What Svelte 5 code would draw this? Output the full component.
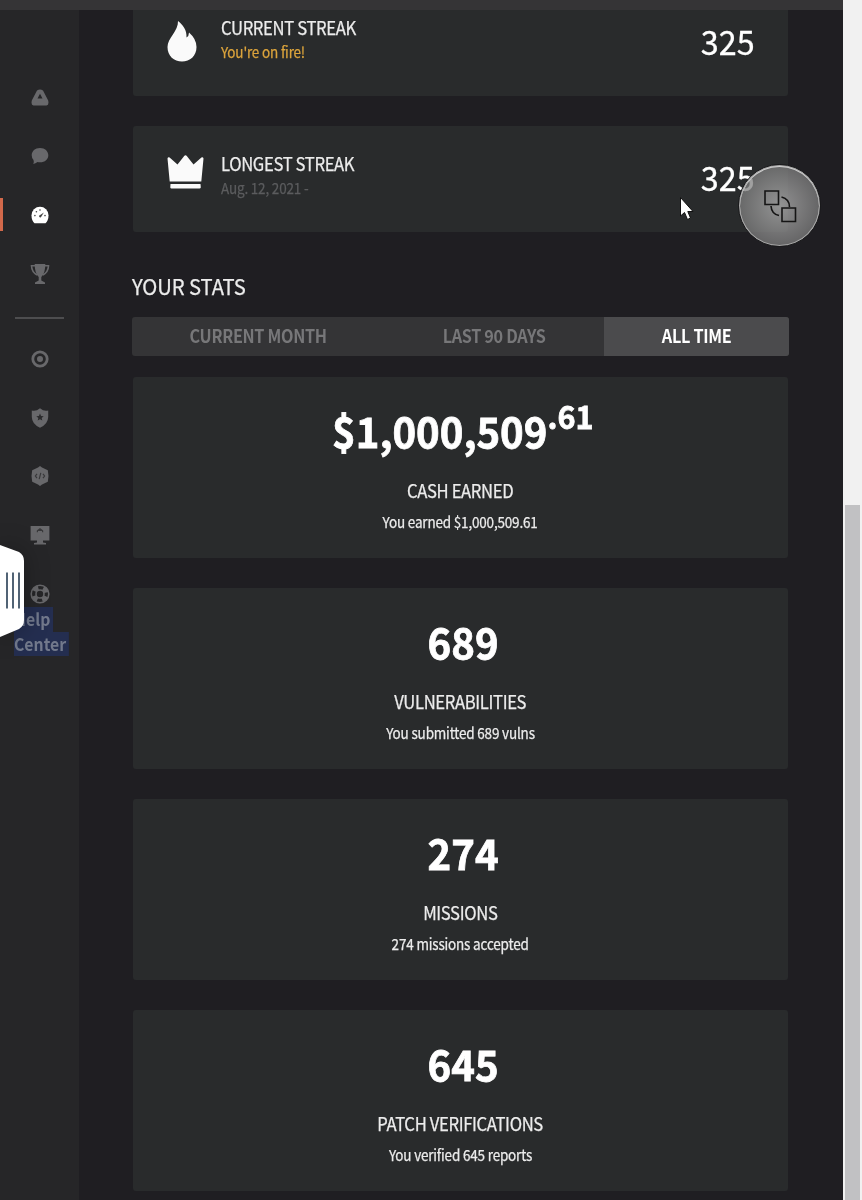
<script>
  let range = 'ALL TIME';

  const tabs = [
    { name: 'CURRENT MONTH', size: 'wide' },
    { name: 'LAST 90 DAYS', size: 'mid' },
    { name: 'ALL TIME', size: 'narrow' }
  ];

  const stats = [
    { value: '$1,000,509', cents: '.61', label: 'CASH EARNED', note: 'You earned $1,000,509.61' },
    { value: '689', label: 'VULNERABILITIES', note: 'You submitted 689 vulns' },
    { value: '274', label: 'MISSIONS', note: '274 missions accepted' },
    { value: '645', label: 'PATCH VERIFICATIONS', note: 'You verified 645 reports' }
  ];
</script>

<div class="page">
  <nav class="sidebar">
    <a class="item" href="#home" aria-label="Home">
      <svg width="18" height="20" viewBox="0 -2 18 20"><path fill-rule="evenodd" d="M6 1.600Q9-.6 12 1.600L17.200 11.500Q18.200 16 15.500 16.500H2.500Q-.2 16 .8 11.500ZM9 4.800 6.500 9.400H11.500Z" /></svg>
    </a>
    <a class="item" href="#messages" aria-label="Messages">
      <svg width="18" height="18" viewBox="0 0 18 18"><path d="M9 1C14 1 17.300 4.200 17.300 8.200S14 15.300 9 15.300Q7.700 15.300 6.500 15Q4.500 16.800 2.300 16.900Q3.300 15.200 2.500 12.900Q.7 11 .7 8.200C.7 4.200 4 1 9 1Z" /></svg>
    </a>
    <a class="item active" href="#dashboard" aria-label="Dashboard">
      <svg width="18" height="18" viewBox="0 0 18 18">
        <path d="M3.500 17.200Q.5 14.500 .5 9.200A8.500 8.500 0 0 1 17.500 9.200Q17.500 14.500 14.500 17.200Z" />
        <path class="ink" d="M8 9.800 12.900 6.400 9.900 11.200Q8.200 12 8 9.800Z" />
        <g class="ink"><circle cx="3.900" cy="9.600" r=".8" /><circle cx="5.400" cy="5.700" r=".8" /><circle cx="9" cy="4" r=".8" /><circle cx="14" cy="9.600" r=".8" /></g>
      </svg>
    </a>
    <a class="item trophy" href="#ranking" aria-label="Ranking">
      <svg width="20" height="22" viewBox="0 0 20 22">
        <path d="M4.700 1H15.300Q15.400 10 11.300 14V17.500L15 19.500V21H5V19.500L8.700 17.500V14Q4.600 10 4.700 1Z" />
        <path class="line" d="M5 2.800H1.500Q1.700 9 7 12M15 2.800H18.500Q18.300 9 13 12" />
      </svg>
    </a>
    <hr />
    <a class="item" href="#targets" aria-label="Targets">
      <svg width="18" height="18" viewBox="0 0 18 18"><circle class="ring" cx="9" cy="9" r="7.200" /><circle cx="9" cy="9" r="3" /></svg>
    </a>
    <a class="item" href="#patches" aria-label="Patches">
      <svg width="18" height="20" viewBox="0 0 18 20">
        <path d="M9 .3 12 2.300Q14.500 3 17.200 2.500V9Q17 16.200 9 19.700Q1 16.200 .8 9V2.500Q3.500 3 6 2.300Z" />
        <path class="hole" d="M9 5.600 10.100 8.100 12.700 8.300 10.700 10 11.300 12.600 9 11.200 6.700 12.600 7.300 10 5.300 8.300 7.900 8.100Z" />
      </svg>
    </a>
    <a class="item" href="#code" aria-label="Code">
      <svg width="18" height="20" viewBox="0 0 18 20">
        <path d="M9 0 11 1.500 16.800 4.300 17.500 10 16.800 15.700 11 18.500 9 20 7 18.500 1.200 15.700 .5 10 1.200 4.300 7 1.500Z" />
        <path class="hole-line" d="M6 7.800 4.400 10 6 12.200M12 7.800 13.600 10 12 12.200M9.800 6.800 8.200 13.200" />
      </svg>
    </a>
    <a class="item" href="#screen" aria-label="Screen">
      <svg width="20" height="20" viewBox="0 0 20 20">
        <path d="M.6 1H19.400V15.500H13V17.500L16 18V19.500H4V18L7 17.500V15.500H.6Z" />
        <path class="hole-line" d="M7.400 7.200V5.800L10 3.800 12.600 5.800V7.200M8 5.500H12" />
      </svg>
    </a>
    <a class="item" href="#help" aria-label="Help">
      <svg width="20" height="20" viewBox="0 0 20 20">
        <circle class="thin" cx="10" cy="10" r="8.800" />
        <circle class="thin" cx="10" cy="10" r="4" />
        <circle class="buoy" cx="10" cy="10" r="6.500" />
      </svg>
    </a>
    <div class="help"><mark>Help</mark><br /><mark>Center</mark></div>
  </nav>

  <main>
    <section class="streaks">
      <article class="streak">
        <div class="symbol">
          <svg width="30" height="41" viewBox="0 0 30 41"><path d="M11 0C16 4 20 9 19.500 16.500Q22 15 22 11.500Q29.500 18 29.500 26C29.500 35 23 40.500 15 40.500S.5 35 .5 26C.5 17 11.500 10 11 0Z" /></svg>
        </div>
        <div class="info">
          <h3>CURRENT STREAK</h3>
          <p class="fire">You're on fire!</p>
        </div>
        <strong>325</strong>
      </article>
      <article class="streak">
        <div class="symbol crown">
          <svg width="37" height="34" viewBox="0 0 37 34"><path d="M.5 3.500Q1 1.800 2.600 2.600L10.500 9.500 17 1.200Q18.500-.6 20 1.200L26.500 9.500 34.400 2.600Q36 1.800 36.500 3.500L34.300 26.500H2.700ZM3.500 29H33.500L33.800 32.500Q33.500 33.500 32.500 33.500H4.500Q3.400 33.500 3.300 32.500Z" /></svg>
        </div>
        <div class="info">
          <h3>LONGEST STREAK</h3>
          <p>Aug. 12, 2021 -</p>
        </div>
        <strong>325</strong>
      </article>
    </section>

    <h2>YOUR STATS</h2>
    <div class="tabs">
      {#each tabs as tab}
        <button class={tab.size} class:selected={range === tab.name} on:click={() => (range = tab.name)}>
          <span>{tab.name}</span>
        </button>
      {/each}
    </div>

    <section class="stats">
      {#each stats as stat}
        <article class="stat">
          <div class="value">{stat.value}{#if stat.cents}<sup>{stat.cents}</sup>{/if}</div>
          <h3>{stat.label}</h3>
          <p>{stat.note}</p>
        </article>
      {/each}
    </section>
  </main>

  <aside class="scrollbar"><div class="thumb"></div></aside>

  <div class="topbar"></div>

  <svg class="handle" width="26" height="96" viewBox="0 0 26 96">
    <path fill="#fff" d="M0 2 19 9Q24 12 24 18V77Q24 83 19 86L0 94Z" />
    <path stroke="#3f5367" stroke-width="1.800" d="M7 29.500V65.500M13 29.500V65.500M19 29.500V65.500" />
  </svg>

  <svg class="cursor" width="16" height="26" viewBox="0 0 16 26">
    <path fill="#fff" stroke="#111" stroke-width="1" d="M1.500 1.500V20L5.500 16.500 8.500 23.500 11.500 22 8.800 15.500H14Z" />
  </svg>

  <div class="bubble">
    <svg width="34" height="34" viewBox="0 0 34 34">
      <path d="M2 2H15.500V15.500H2ZM19 19H32.500V32.500H19ZM18.500 8Q26.500 10 26.500 18M8 17Q8.500 25 16 26.500" />
    </svg>
  </div>
</div>

<style>
  :global(body) {
    margin: 0;
    background: #1f1e22;
  }

  .page {
    position: relative;
    display: flex;
    height: 1200px;
    overflow: hidden;
    background: #1f1e22;
    color: #ececec;
    font-family: "Noto Sans CJK SC", "Open Sans", sans-serif;
  }

  h2, h3, p {
    margin: 0;
    font-weight: 400;
    white-space: nowrap;
    -webkit-text-stroke: 0.25px currentColor;
  }

  /* slightly condensed lettering everywhere */
  h2, h3, p, strong, .value, .tabs span {
    transform: scaleX(0.9);
    transform-origin: left;
  }

  .sidebar {
    width: 79px;
    flex: none;
    box-sizing: border-box;
    padding-top: 68px;
    background: #262628;
  }

  .item {
    display: flex;
    align-items: center;
    justify-content: center;
    height: 58.7px;
  }

  .item svg {
    fill: #68686b;
  }

  .item.active svg {
    fill: #fff;
  }

  .item.active {
    background: linear-gradient(#d2694b, #d2694b) left center / 3px 33px no-repeat;
  }

  .trophy svg {
    margin-top: 2px;
  }

  .item .ink {
    fill: #444;
  }

  .item .hole {
    fill: #2b2b2d;
  }

  .item .line, .item .ring, .item .thin, .item .buoy, .item .hole-line {
    fill: none;
    stroke: #68686b;
    stroke-width: 1.6;
  }

  .item .ring {
    stroke-width: 2.8;
  }

  .item .buoy {
    stroke-width: 4.5;
    stroke-dasharray: 5.1 5.1;
    stroke-dashoffset: -2.55;
  }

  .item .hole-line {
    stroke: #38383a;
    stroke-width: 1.2;
  }

  hr {
    width: 49px;
    height: 2px;
    margin: 14px auto 11px 15px;
    border: 0;
    background: #4d4d4f;
  }

  .help {
    margin: -16px 0 0 14px;
    font-size: 17px;
    font-weight: 700;
    line-height: 24.5px;
    transform: scaleX(0.93);
    transform-origin: left;
  }

  mark {
    display: inline-block;
    padding-right: 3px;
    background: #242e50;
    color: #72798c;
  }

  main {
    width: 657px;
    margin: 0 54px 0 53px;
    flex: none;
  }

  .streaks {
    display: flex;
    flex-direction: column;
    gap: 30px;
    margin: -10px 1px 0;
  }

  .streak, .stat {
    box-sizing: border-box;
    border-radius: 3px;
    background: #292b2c;
  }

  .streak {
    display: flex;
    height: 106px;
    padding: 25px 33px 0 33px;
  }

  .symbol {
    width: 55px;
    padding: 6px 0 0 1px;
    box-sizing: border-box;
    fill: #fafafa;
  }

  .crown {
    padding-top: 4px;
  }

  .info {
    flex: 1;
  }

  h3 {
    font-size: 18.5px;
    line-height: 24px;
    letter-spacing: -0.4px;
  }

  p {
    font-size: 15px;
    line-height: 24px;
    letter-spacing: -0.2px;
  }

  .info p {
    margin-top: 1px;
    color: #5b5c5e;
  }

  .info .fire {
    color: #dca43c;
  }

  strong {
    margin-top: -1px;
    font-size: 34px;
    font-weight: 400;
    line-height: 54px;
    color: #fff;
    transform: scaleX(0.95);
    transform-origin: right;
    -webkit-text-stroke: 0.3px currentColor;
  }

  h2 {
    margin-top: 37px;
    font-size: 22px;
    line-height: 32px;
    transform: scaleX(0.92);
    letter-spacing: -0.1px;
  }

  .tabs {
    display: flex;
    height: 39px;
    margin: 16px 0 21px;
    overflow: hidden;
    border-radius: 3px;
    background: #343436;
  }

  .tabs button {
    padding: 0 0 3px;
    border: 0;
    background: none;
    color: #777779;
    font: 700 18px/36px "Noto Sans CJK SC", "Open Sans", sans-serif;
    letter-spacing: -0.35px;
    white-space: nowrap;
  }

  .tabs span {
    display: inline-block;
    transform-origin: center;
  }

  .wide {
    width: 253px;
  }

  .mid {
    width: 219px;
  }

  .narrow {
    width: 185px;
  }

  .tabs .selected {
    background: #4b4b4d;
    color: #fff;
  }

  .stats {
    display: flex;
    flex-direction: column;
    gap: 30px;
    margin: 0 1px;
  }

  .stat {
    display: flex;
    flex-direction: column;
    align-items: center;
    height: 181px;
    padding-top: 23px;
  }

  .stat > * {
    transform-origin: center;
  }

  .value {
    display: flex;
    height: 78px;
    padding-left: 5px;
    font-size: 42px;
    font-weight: 700;
    line-height: 60px;
    color: #fff;
    transform: scaleX(0.955);
    -webkit-text-stroke: 0.8px currentColor;
  }

  sup {
    font-size: 32px;
    line-height: 31px;
  }

  .stat p {
    margin-top: 8px;
  }

  .scrollbar {
    width: 19px;
    flex: none;
    background: #f1f1f1;
  }

  .thumb {
    width: 15px;
    height: 695px;
    margin: 505px 0 0 2px;
    background: #c1c1c3;
  }

  .topbar {
    position: absolute;
    top: 0;
    left: 0;
    width: 843px;
    height: 10px;
    background: #353436;
  }

  .handle {
    position: absolute;
    left: 0;
    top: 543px;
    filter: drop-shadow(0 0 12px rgba(0, 0, 0, 0.3));
  }

  .cursor {
    position: absolute;
    left: 679px;
    top: 196px;
  }

  .bubble {
    position: absolute;
    left: 738px;
    top: 164px;
    display: flex;
    align-items: center;
    justify-content: center;
    box-sizing: border-box;
    width: 83px;
    height: 83px;
    border: 1px solid #19191b;
    border-radius: 50%;
    background: radial-gradient(circle, rgba(165, 165, 165, 0.85), rgba(125, 125, 125, 0.75) 70%);
    box-shadow: inset 0 0 0 1px #a5a5a5, inset 0 1px 0 1px #d0d0d0;
  }

  .bubble path {
    fill: none;
    stroke: #151515;
    stroke-width: 1.6;
  }
</style>
